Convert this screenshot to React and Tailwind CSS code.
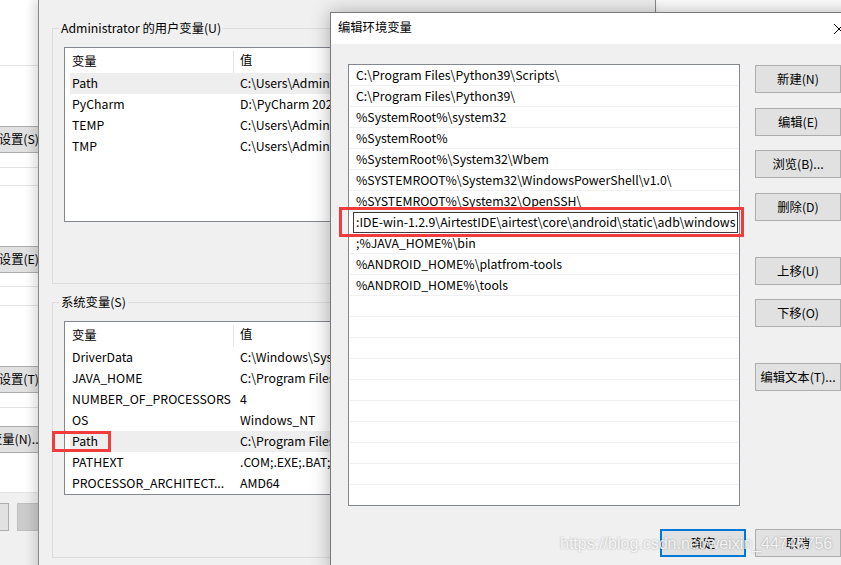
import React from "react";

const userVars = [
  ["Path", "C:\\Users\\Administrator\\AppData\\Local\\Microsoft\\WindowsApps;"],
  ["PyCharm", "D:\\PyCharm 2020.3\\bin;"],
  ["TEMP", "C:\\Users\\Administrator\\AppData\\Local\\Temp"],
  ["TMP", "C:\\Users\\Administrator\\AppData\\Local\\Temp"],
];

const sysVars = [
  ["DriverData", "C:\\Windows\\System32\\Drivers\\DriverData"],
  ["JAVA_HOME", "C:\\Program Files\\Java\\jdk1.8.0_271"],
  ["NUMBER_OF_PROCESSORS", "4"],
  ["OS", "Windows_NT"],
  ["Path", "C:\\Program Files\\Python39\\Scripts\\;C:\\Program Files\\Python39\\"],
  ["PATHEXT", ".COM;.EXE;.BAT;.CMD;.VBS;.VBE;.JS;.JSE;.WSF;.WSH;.MSC"],
  ["PROCESSOR_ARCHITECT...", "AMD64"],
];

const paths = [
  "C:\\Program Files\\Python39\\Scripts\\",
  "C:\\Program Files\\Python39\\",
  "%SystemRoot%\\system32",
  "%SystemRoot%",
  "%SystemRoot%\\System32\\Wbem",
  "%SYSTEMROOT%\\System32\\WindowsPowerShell\\v1.0\\",
  "%SYSTEMROOT%\\System32\\OpenSSH\\",
  null,
  ";%JAVA_HOME%\\bin",
  "%ANDROID_HOME%\\platfrom-tools",
  "%ANDROID_HOME%\\tools",
];

const VarList = ({ rows, selected, height }) => (
  <div
    className="mt-[11px] ml-[11px] w-[560px] border border-[#828790] bg-white overflow-hidden"
    style={{ height }}
  >
    <div className="flex h-[25px] items-center pl-[5px]">
      <div className="w-[164px] h-[22px] mt-[2px] pl-[2px] flex items-center border-r border-[#e5e5e5]">变量</div>
      <div className="pl-[6px]">值</div>
    </div>
    {rows.map(([name, value], i) => (
      <div
        key={name + i}
        className={`flex h-[21px] items-center ml-[5px] whitespace-nowrap ${i === selected ? "bg-[#eeeeee]" : ""}`}
      >
        <div className="w-[164px] pl-[2px]">{name}</div>
        <div className="pl-[6px]">{value}</div>
      </div>
    ))}
  </div>
);

const SideBtn = ({ children, className = "" }) => (
  <div
    className={`w-[86px] h-[28px] bg-[#e1e1e1] border border-[#adadad] flex items-center justify-center whitespace-nowrap ${className}`}
  >
    {children}
  </div>
);

const LeftBtn = ({ children, shift = "" }) => (
  <div className="h-[27px] shrink-0 bg-[#e1e1e1] border-y border-[#adadad] flex items-center justify-end overflow-hidden">
    <span className={`whitespace-nowrap ${shift}`}>{children}</span>
  </div>
);

export default function App() {
  return (
    <div className="relative w-[841px] h-[565px] overflow-hidden bg-white text-[12.3px] text-black font-['Noto_Sans_CJK_SC',sans-serif]">
      {/* window behind, left edge */}
      <div className="absolute left-0 top-0 w-[39px] h-[565px] bg-white overflow-hidden flex flex-col">
        <div className="h-[66px] shrink-0 border-b border-[#e3e3e3]" />
        <div className="h-[60px] shrink-0" />
        <LeftBtn>设置(S)</LeftBtn>
        <div className="h-[15px] shrink-0 border-b border-[#e3e3e3]" />
        <div className="h-[18px] shrink-0 border-b border-[#e3e3e3]" />
        <div className="h-[60px] shrink-0" />
        <LeftBtn>设置(E)</LeftBtn>
        <div className="h-[14px] shrink-0 border-b border-[#e3e3e3]" />
        <div className="h-[19px] shrink-0 border-b border-[#e3e3e3]" />
        <div className="h-[60px] shrink-0" />
        <LeftBtn>设置(T)</LeftBtn>
        <div className="h-[15px] shrink-0 border-b border-[#e3e3e3]" />
        <div className="h-[18px] shrink-0" />
        <LeftBtn shift="mr-[-3px]">环境变量(N)...</LeftBtn>
        <div className="h-[40px] shrink-0 border-b border-[#e3e3e3]" />
        <div className="flex-1 bg-[#f0f0f0] pt-[10px]">
          <div className="flex h-[28px]">
            <div className="w-[9px] bg-[#e1e1e1] border border-l-0 border-[#adadad]" />
            <div className="ml-[8px] flex-1 bg-[#cccccc] border border-r-0 border-[#bfbfbf]" />
          </div>
        </div>
      </div>

      {/* 环境变量 window */}
      <div className="absolute left-[38px] top-0 w-[618px] h-[600px] bg-[#f0f0f0] border-x border-[#8a8a8a] shadow-[-4px_0_10px_rgba(0,0,0,0.15)] pl-[13px] pt-[20px]">
        <fieldset className="w-[590px] h-[264px] border border-[#dcdcdc]">
          <legend className="ml-[6px] px-[2px] leading-[16px]">Administrator 的用户变量(U)</legend>
          <VarList rows={userVars} selected={0} height={175} />
        </fieldset>
        <fieldset className="mt-[10px] w-[590px] h-[264px] border border-[#dcdcdc]">
          <legend className="ml-[6px] px-[2px] leading-[16px]">系统变量(S)</legend>
          <VarList rows={sysVars} selected={4} height={174} />
        </fieldset>
      </div>

      {/* 编辑环境变量 dialog */}
      <div className="absolute left-[330px] top-[12px] w-[533px] h-[560px] bg-[#f0f0f0] border border-[#7a7a7a] shadow-[0_0_18px_rgba(0,0,0,0.3)]">
        <div className="h-[31px] bg-white flex items-center justify-between pl-[7px]">
          <span className="-mt-[2px]">编辑环境变量</span>
          <div className="w-[46px] h-full flex items-center justify-center">
            <svg width="10" height="10" viewBox="0 0 10 10">
              <path d="M0 0L10 10M10 0L0 10" stroke="#000" strokeWidth="1" />
            </svg>
          </div>
        </div>
        <div className="pl-[17px] pt-[20px] flex flex-col">
          <div className="flex">
            <div className="w-[392px] h-[442px] border border-[#828790] bg-white overflow-hidden">
              {[...Array(21)].map((_, i) => {
                const p = paths[i];
                if (i === 7) {
                  return (
                    <div key={i} className="h-[21px] mx-px border-b border-[#f0f0f0]">
                      <div className="ml-[3px] h-[21px] border border-[#3c3c3c] bg-white pl-[2px] leading-[19px] whitespace-nowrap overflow-hidden">
                        :IDE-win-1.2.9\AirtestIDE\airtest\core\android\static\adb\windows
                      </div>
                    </div>
                  );
                }
                return (
                  <div key={i} className="h-[21px] mx-px border-b border-[#f0f0f0] pl-[6px] leading-[20px] whitespace-nowrap">
                    {p}
                  </div>
                );
              })}
            </div>
            <div className="ml-[15px] flex flex-col">
              <SideBtn className="mt-px">新建(N)</SideBtn>
              <SideBtn className="mt-[15px]">编辑(E)</SideBtn>
              <SideBtn className="mt-[14px]">浏览(B)...</SideBtn>
              <SideBtn className="mt-[15px]">删除(D)</SideBtn>
              <SideBtn className="mt-[36px]">上移(U)</SideBtn>
              <SideBtn className="mt-[14px]">下移(O)</SideBtn>
              <SideBtn className="mt-[36px]">编辑文本(T)...</SideBtn>
            </div>
          </div>
          <div className="mt-[23px] ml-[312px] flex">
            <div className="w-[86px] h-[28px] bg-[#e1e1e1] border-2 border-[#0078d7] flex items-center justify-center">确定</div>
            <div className="ml-[9px] w-[86px] h-[28px] bg-[#e1e1e1] border border-[#adadad] flex items-center justify-center">取消</div>
          </div>
        </div>
      </div>

      {/* annotation boxes */}
      <div className="absolute left-[52px] top-[431px] w-[59px] h-[21px] border-[3px] border-[#f03c3c]" />
      <div className="absolute left-[339px] top-[207px] w-[405px] h-[30px] border-[3px] border-[#f03c3c]" />

      {/* watermark */}
      <div className="absolute left-[560px] top-[534px] text-[16px] leading-[20px] text-white/85 font-['Liberation_Sans',sans-serif] [text-shadow:0_0_2px_rgba(0,0,0,0.35)] whitespace-nowrap">
        https://blog.csdn.net/weixin_44745756
      </div>
    </div>
  );
}
